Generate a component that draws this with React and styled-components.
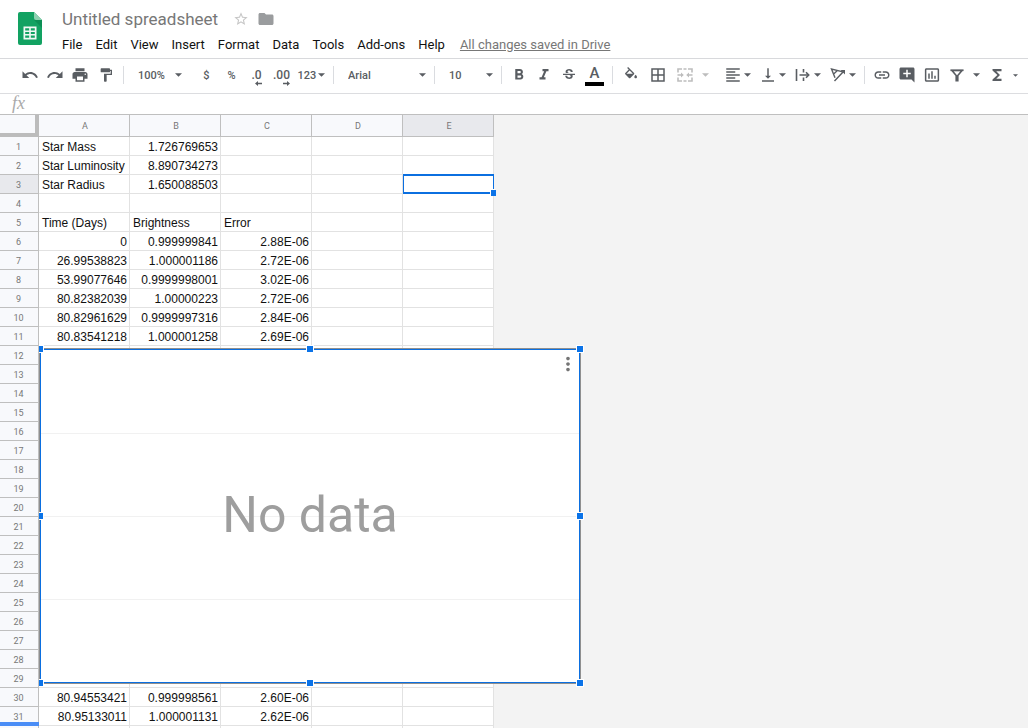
import React from "react";
import styled, { createGlobalStyle, css } from "styled-components";
import {
  MdUndo, MdRedo, MdPrint, MdFormatPaint, MdFormatBold, MdFormatItalic, MdStrikethroughS,
  MdBorderAll, MdFormatAlignLeft, MdVerticalAlignBottom, MdLink,
  MdAddComment, MdInsertChartOutlined, MdFunctions, MdStarBorder, MdFolder, MdMoreVert,
} from "react-icons/md";

const GlobalStyle = createGlobalStyle`
  * { box-sizing: border-box; }
  body { margin: 0; background: #fff; font-family: Roboto, "Liberation Sans", sans-serif; }
  button, input, select { font-family: inherit; border: 0; background: none; padding: 0; margin: 0; outline: 0; }
  button svg { display: block; }
`;

const Page = styled.div`
  display: flex;
  flex-direction: column;
  height: 100vh;
  overflow: hidden;
`;

const Header = styled.header`
  display: flex;
  flex: none;
  height: 59px;
  padding-left: 18px;
  gap: 20px;
  border-bottom: 1px solid #d8d9dc;
`;

const Logo = styled.svg`
  width: 24px;
  height: 33px;
  margin-top: 12px;
`;

const HeaderText = styled.div`
  display: flex;
  flex-direction: column;
  padding-top: 7px;
`;

const TitleRow = styled.div`
  display: flex;
  align-items: center;
  height: 24px;
`;

const TitleInput = styled.input`
  width: 171px;
  height: 24px;
  font-size: 17px;
  color: #777;
`;

const TitleButton = styled.button`
  color: ${(p) => p.$color};
  margin-right: 8px;
`;

const MenuBar = styled.nav`
  display: flex;
  align-items: center;
  gap: 13px;
  height: 28px;
  font-size: 13px;
`;

const MenuItem = styled.button`
  font-size: 13px;
  line-height: 18px;
  color: #111;
  white-space: nowrap;
`;

const SaveStatus = styled.a`
  margin-left: 2px;
  line-height: 18px;
  color: #777;
  white-space: nowrap;
`;

const Toolbar = styled.div`
  display: flex;
  flex: none;
  align-items: center;
  height: 35px;
  padding: 0 0 2px 17px;
  border-bottom: 1px solid #dcdde0;
  color: #595d62;
`;

const ToolButton = styled.button`
  display: flex;
  flex: none;
  align-items: center;
  justify-content: center;
  width: ${(p) => (p.$wide ? 27 : 25)}px;
  height: 26px;
  font-size: 11px;
  font-weight: 500;
  color: ${(p) => (p.$muted ? "#bdbdbd" : "inherit")};
`;

const DropButton = styled(ToolButton)`
  width: 35px;
  gap: 2px;
`;

const CaretButton = styled(ToolButton)`
  width: ${(p) => (p.$spaced ? 22 : 15)}px;
  padding-left: 4px;
  justify-content: flex-start;
`;

const Separator = styled.span`
  flex: none;
  width: 1px;
  height: 18px;
  margin: 0 4px;
  background: #dadce0;
`;

const Picker = styled.label`
  display: flex;
  flex: none;
  align-items: center;
  width: ${(p) => p.$width}px;
  height: 26px;
  padding: 0 ${(p) => p.$end}px 0 10px;

  select {
    flex: 1;
    min-width: 0;
    appearance: none;
    font-size: 11px;
    font-weight: 500;
    color: inherit;
  }
`;

const Decimal = styled.span`
  display: flex;
  flex-direction: column;
  align-items: flex-end;
  padding-top: 4px;
  font-size: 12px;
  line-height: 12px;
`;

const TextColor = styled.span`
  display: flex;
  flex-direction: column;
  align-items: center;
  width: 19px;
  font-size: 15px;
  line-height: 17px;
  border-bottom: 4px solid #000;
`;

const FormulaBar = styled.label`
  display: flex;
  flex: none;
  align-items: center;
  height: 21px;
  padding: 0 0 2px 12px;
  gap: 12px;
  border-bottom: 1px solid #bfbfbf;

  span {
    font: italic 18px "Liberation Serif", serif;
    line-height: 18px;
    color: #aaa;
  }
  input {
    flex: 1;
    font-size: 12px;
  }
`;

const Sheet = styled.main`
  position: relative;
  flex: 1;
  min-height: 0;
  overflow: hidden;
  background: #f3f3f3;
`;

const Grid = styled.table`
  table-layout: fixed;
  width: 494px;
  border-collapse: separate;
  border-spacing: 0;
  background: #fff;
`;

const headCell = css`
  font-size: 9px;
  font-weight: 400;
  color: #777;
  background: ${(p) => (p.$active ? "#e8e9ed" : "#f8f9fc")};
  border-right: 1px solid #bfbfbf;
  border-bottom: 1px solid #bfbfbf;
`;

const Corner = styled.th`
  width: 39px;
  height: 22px;
  padding: 0;
  background: #f8f9fc;
  border-right: 4px solid #bcbcbc;
  border-bottom: 4px solid #bcbcbc;
`;

const ColumnHead = styled.th`
  ${headCell}
  padding: 0 0 0 2px;
`;

const RowHead = styled.th`
  ${headCell}
  position: relative;
  height: 19px;
  padding: 2px 1px 0 0;
  line-height: 16px;
  ${(p) => p.$freeze && css`
    &::after {
      content: "";
      position: absolute;
      left: 0;
      right: -1px;
      bottom: -1px;
      height: 4px;
      background: #4a8df6;
    }
  `}
`;

const Cell = styled.td`
  position: relative;
  height: 19px;
  padding: 2px 2px 0 3px;
  font: 12px "Liberation Sans", Arial, sans-serif;
  line-height: 16px;
  color: #111;
  white-space: nowrap;
  text-align: ${(p) => (p.$number ? "right" : "left")};
  border-right: 1px solid #e2e2e2;
  border-bottom: 1px solid #e2e2e2;
`;

const Selection = styled.div`
  position: absolute;
  z-index: 1;
  top: -1px;
  left: 0;
  right: -1px;
  bottom: -1px;
  border: solid #0b6fe0;
  border-width: 2px 1px;

  &::after {
    content: "";
    position: absolute;
    right: -3px;
    bottom: -4px;
    width: 5px;
    height: 6px;
    background: #0b73e8;
    box-shadow: -1px -1px 0 #fff;
  }
`;

const ChartLayer = styled.div`
  position: absolute;
  inset: 0 0 0 39px;
  overflow: hidden;
`;

const ChartFrame = styled.section`
  position: absolute;
  top: 234px;
  left: 1px;
  display: grid;
  grid-template-rows: 85px 83px 83px 1fr;
  width: 540px;
  height: 334px;
  background: #fff;
`;

const ChartBand = styled.div`
  border-bottom: 1px solid #f1f1f1;
`;

const ChartOutline = styled.div`
  position: absolute;
  inset: 0;
  box-shadow: inset 0 0 0 1px #0b6fe0, 0 0 0 1px #8f8f8f;
`;

const ChartMessage = styled.div`
  position: absolute;
  inset: 0;
  display: flex;
  align-items: center;
  justify-content: center;
  padding-bottom: 2px;
  font-size: 50px;
  line-height: 60px;
  color: #9e9e9e;
`;

const ChartMenu = styled.button`
  position: absolute;
  top: 4px;
  right: 1px;
  color: #757575;
`;

const Handle = styled.span`
  position: absolute;
  left: ${(p) => p.$x}%;
  top: ${(p) => p.$y}%;
  width: 6px;
  height: 6px;
  margin: -3px 0 0 -3px;
  background: #0b73e8;
  box-shadow: 0 0 0 1px #fff;
`;

const Caret = ({ small }) => (
  <svg width={small ? 5 : 7} height={small ? 3 : 4} viewBox="0 0 8 4" aria-hidden="true">
    <path d="M0 0h8L4 4z" fill="currentColor" />
  </svg>
);

const Arrow = ({ left }) => (
  <svg width="7" height="5" viewBox="0 0 7 5" aria-hidden="true">
    <path d={left ? "M0 2.5 3 0v1.7h4v1.6H3V5z" : "M7 2.5 4 0v1.7H0v1.6h4V5z"} fill="currentColor" />
  </svg>
);

const Stroke = ({ children, weight = 1.6 }) => (
  <svg width="18" height="18" viewBox="0 0 18 18" fill="none" stroke="currentColor" strokeWidth={weight} aria-hidden="true">
    {children}
  </svg>
);

const FillIcon = ({ size }) => (
  <svg width={size} height={size} viewBox="0 0 24 24" fill="currentColor" aria-hidden="true">
    <path d="M16.560 8.940L7.620 0 6.210 1.410l2.380 2.380-5.150 5.150c-.59.59-.59 1.540 0 2.120l5.500 5.500c.29.29.68.44 1.060.44s.77-.15 1.060-.44l5.500-5.500c.59-.58.59-1.530 0-2.120zM5.210 10L10 5.210 14.790 10H5.210zM19 11.500s-2 2.170-2 3.500c0 1.100.9 2 2 2s2-.9 2-2c0-1.330-2-3.500-2-3.500z" />
  </svg>
);

const MergeIcon = () => (
  <Stroke>
    <path d="M2 6.500V3h4M7.500 3h3M12 3h4v3.500M2 11.500V15h4M7.500 15h3M12 15h4v-3.500M1.500 9h4.500M16.500 9H12" />
    <path d="M5 6.500 7.800 9 5 11.500zM13 6.500 10.200 9l2.800 2.500z" fill="currentColor" stroke="none" />
  </Stroke>
);

const WrapIcon = () => (
  <Stroke>
    <path d="M2.500 3v12M9.500 3v3.500M9.500 11.500V15M5.500 9h8.500" />
    <path d="M12 6.300l2.700 2.700-2.700 2.700" />
  </Stroke>
);

const RotateIcon = () => (
  <Stroke weight={1.4}>
    <path d="M6 11.800 2.500 3 13 5.600M4.400 8.200 8.400 4.600M5.500 15 14.500 5.500" />
    <path d="M11.500 4h4.500v4.500z" fill="currentColor" stroke="none" />
  </Stroke>
);

const FilterIcon = () => (
  <Stroke>
    <path d="M4 4.500h10L9.800 9.500v5.300H8.200V9.500z" />
    <path d="M2.500 4.300h13" />
  </Stroke>
);

const columns = ["A", "B", "C", "D", "E"];
const values = {
  1: ["Star Mass", 1.726769653],
  2: ["Star Luminosity", 8.890734273],
  3: ["Star Radius", 1.650088503],
  5: ["Time (Days)", "Brightness", "Error"],
  6: [0, 0.999999841, "2.88E-06"],
  7: [26.99538823, 1.000001186, "2.72E-06"],
  8: [53.99077646, 0.9999998001, "3.02E-06"],
  9: [80.82382039, 1.00000223, "2.72E-06"],
  10: [80.82961629, 0.9999997316, "2.84E-06"],
  11: [80.83541218, 1.000001258, "2.69E-06"],
  30: [80.94553421, 0.999998561, "2.60E-06"],
  31: [80.95133011, 1.000001131, "2.62E-06"],
};
const lastRow = 31;
const rows = Array.from({ length: lastRow + 1 }, (_, i) => i + 1);
const menus = ["File", "Edit", "View", "Insert", "Format", "Data", "Tools", "Add-ons", "Help"];
const handles = [[0, 0], [50, 0], [100, 0], [0, 50], [100, 50], [0, 100], [50, 100], [100, 100]];

const Tool = ({ label, icon: Icon, wide, muted, size = 18 }) => (
  <ToolButton aria-label={label} $wide={wide} $muted={muted}>
    <Icon size={size} />
  </ToolButton>
);

const DropTool = ({ label, icon: Icon }) => (
  <DropButton aria-label={label}>
    <Icon size={18} />
    <Caret />
  </DropButton>
);

const PickerField = ({ label, width, end, value }) => (
  <Picker $width={width} $end={end}>
    <select aria-label={label} defaultValue={value}>
      <option>{value}</option>
    </select>
    <Caret />
  </Picker>
);

export default function App() {
  return (
    <Page>
      <GlobalStyle />
      <Header>
        <Logo viewBox="0 0 24 33" aria-hidden="true">
          <path d="M2 0h14l8 8v23a2 2 0 0 1-2 2H2a2 2 0 0 1-2-2V2a2 2 0 0 1 2-2z" fill="#12a262" />
          <path d="M16 8h8v8z" fill="#0c8f55" />
          <path d="M16 0l8 8h-6a2 2 0 0 1-2-2z" fill="#8ed1b1" />
          <path
            d="M5.500 14.500h13v13h-13zM7.200 16.200v2.200h4v-2.200zM12.800 16.200v2.200h4v-2.200zM7.200 19.900v2.200h4v-2.200zM12.800 19.900v2.200h4v-2.200zM7.200 23.600v2.200h4v-2.200zM12.800 23.600v2.200h4v-2.200z"
            fill="#f1f8f4"
            fillRule="evenodd"
          />
        </Logo>
        <HeaderText>
          <TitleRow>
            <TitleInput aria-label="Title" defaultValue="Untitled spreadsheet" />
            <TitleButton aria-label="Star" $color="#c6c6c6"><MdStarBorder size={16} /></TitleButton>
            <TitleButton aria-label="Move to folder" $color="#9a9c9e"><MdFolder size={18} /></TitleButton>
          </TitleRow>
          <MenuBar>
            {menus.map((m) => <MenuItem key={m}>{m}</MenuItem>)}
            <SaveStatus href="#drive">All changes saved in Drive</SaveStatus>
          </MenuBar>
        </HeaderText>
      </Header>

      <Toolbar role="toolbar">
        <Tool label="Undo" icon={MdUndo} />
        <Tool label="Redo" icon={MdRedo} />
        <Tool label="Print" icon={MdPrint} />
        <Tool label="Paint format" icon={MdFormatPaint} wide size={16} />
        <Separator />
        <PickerField label="Zoom" width={66} end={12} value="100%" />
        <ToolButton>$</ToolButton>
        <ToolButton>%</ToolButton>
        <ToolButton aria-label="Decrease decimal places"><Decimal>.0<Arrow left /></Decimal></ToolButton>
        <ToolButton aria-label="Increase decimal places"><Decimal>.00<Arrow /></Decimal></ToolButton>
        <DropButton>123<Caret /></DropButton>
        <Separator />
        <PickerField label="Font" width={92} end={4} value="Arial" />
        <Separator />
        <PickerField label="Font size" width={58} end={4} value="10" />
        <Separator />
        <Tool label="Bold" icon={MdFormatBold} />
        <Tool label="Italic" icon={MdFormatItalic} />
        <Tool label="Strikethrough" icon={MdStrikethroughS} size={16} />
        <ToolButton aria-label="Text color" $wide><TextColor>A</TextColor></ToolButton>
        <Separator />
        <Tool label="Fill color" icon={FillIcon} wide size={16} />
        <Tool label="Borders" icon={MdBorderAll} wide />
        <Tool label="Merge cells" icon={MergeIcon} wide muted />
        <CaretButton aria-label="Merge type" $spaced $muted><Caret /></CaretButton>
        <DropTool label="Horizontal align" icon={MdFormatAlignLeft} />
        <DropTool label="Vertical align" icon={MdVerticalAlignBottom} />
        <DropTool label="Text wrapping" icon={WrapIcon} />
        <DropTool label="Text rotation" icon={RotateIcon} />
        <Separator />
        <Tool label="Insert link" icon={MdLink} />
        <Tool label="Insert comment" icon={MdAddComment} />
        <Tool label="Insert chart" icon={MdInsertChartOutlined} />
        <Tool label="Filter" icon={FilterIcon} />
        <CaretButton aria-label="Filter views"><Caret /></CaretButton>
        <Tool label="Functions" icon={MdFunctions} />
        <CaretButton aria-label="More functions"><Caret small /></CaretButton>
      </Toolbar>

      <FormulaBar>
        <span>fx</span>
        <input aria-label="Formula" />
      </FormulaBar>

      <Sheet>
        <Grid>
          <thead>
            <tr>
              <Corner />
              {columns.map((c) => <ColumnHead key={c} $active={c === "E"}>{c}</ColumnHead>)}
            </tr>
          </thead>
          <tbody>
            {rows.map((r) => (
              <tr key={r}>
                <RowHead $active={r === 3} $freeze={r === lastRow}>{r <= lastRow && r}</RowHead>
                {columns.map((c, i) => (
                  <Cell key={c} $number={r > 5 || (r < 4 && i === 1)}>
                    {values[r]?.[i]}
                    {r === 3 && c === "E" && <Selection />}
                  </Cell>
                ))}
              </tr>
            ))}
          </tbody>
        </Grid>
        <ChartLayer>
          <ChartFrame aria-label="Chart">
            <ChartBand />
            <ChartBand />
            <ChartBand />
            <ChartMessage>No data</ChartMessage>
            <ChartMenu aria-label="Chart options"><MdMoreVert size={22} /></ChartMenu>
            <ChartOutline />
            {handles.map(([x, y]) => <Handle key={`${x}-${y}`} $x={x} $y={y} />)}
          </ChartFrame>
        </ChartLayer>
      </Sheet>
    </Page>
  );
}
